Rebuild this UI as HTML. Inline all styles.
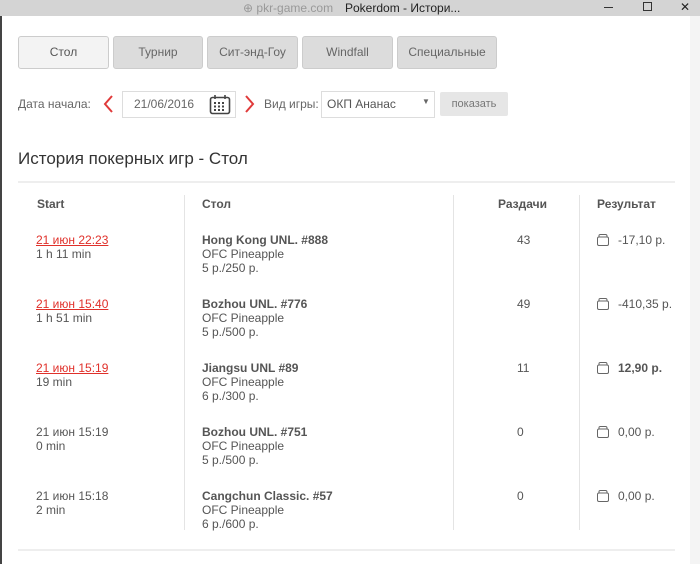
<!DOCTYPE html>
<html><head><meta charset="utf-8"><style>
*{margin:0;padding:0;box-sizing:border-box}
body{width:700px;height:564px;background:#fff;font-family:"Liberation Sans",Arial,sans-serif;color:#555;position:relative;overflow:hidden;font-size:12px}
.abs{position:absolute}
.title{left:0;top:0;width:700px;height:16px;background:#d4d4d4;font-size:12px;color:#222}
.tab{position:absolute;top:36px;height:33px;background:#dcdcdc;border:1px solid #ccc;border-radius:3px;text-align:center;line-height:31px;font-size:12px;color:#666}
.tab.act{background:#f3f3f3;color:#555}
.t{position:absolute;font-size:12px;white-space:nowrap}
.b{font-weight:bold;color:#555}
.red{color:#e0302a;text-decoration:underline}
.vl{position:absolute;width:1px;background:#e4e4e4;top:195px;height:335px}
</style></head><body>
<div class="abs title">
 <span class="abs" style="left:243px;top:1px;color:#999">⊕ pkr-game.com</span>
 <span class="abs" style="left:345px;top:1px">Pokerdom - Истори...</span>
 <span class="abs" style="left:604px;top:7px;width:9px;height:1px;background:#333"></span>
 <span class="abs" style="left:643px;top:2px;width:9px;height:9px;border:1px solid #333"></span>
 <span class="abs" style="left:680px;top:0px">✕</span>
</div>
<div class="abs" style="left:0;top:16px;width:2px;height:548px;background:#444"></div>
<div class="abs" style="left:690px;top:16px;width:10px;height:548px;background:#f4f4f4"></div>
<div class="tab act" style="left:18px;width:91px">Стол</div>
<div class="tab" style="left:113px;width:90px">Турнир</div>
<div class="tab" style="left:207px;width:91px">Сит-энд-Гоу</div>
<div class="tab" style="left:302px;width:91px">Windfall</div>
<div class="tab" style="left:397px;width:100px">Специальные</div>

<span class="t" style="left:18px;top:97px;color:#666">Дата начала:</span>
<svg class="abs" style="left:102px;top:94px" width="12" height="20" viewBox="0 0 12 20"><path d="M10 2 L3 10 L10 18" fill="none" stroke="#e03a3a" stroke-width="2"/></svg>
<div class="abs" style="left:122px;top:91px;width:114px;height:27px;border:1px solid #ddd"></div>
<span class="t" style="left:134px;top:97px;color:#666">21/06/2016</span>
<svg class="abs" style="left:209px;top:94px" width="22" height="21" viewBox="0 0 22 21"><rect x="1.5" y="3.5" width="19" height="16" rx="2" fill="none" stroke="#444" stroke-width="1.6"/><line x1="6" y1="1" x2="6" y2="5" stroke="#444" stroke-width="1.6"/><line x1="16" y1="1" x2="16" y2="5" stroke="#444" stroke-width="1.6"/><g fill="#444"><rect x="5" y="8" width="2" height="2"/><rect x="9" y="8" width="2" height="2"/><rect x="13" y="8" width="2" height="2"/><rect x="5" y="11.5" width="2" height="2"/><rect x="9" y="11.5" width="2" height="2"/><rect x="13" y="11.5" width="2" height="2"/><rect x="5" y="15" width="2" height="2"/><rect x="9" y="15" width="2" height="2"/><rect x="13" y="15" width="2" height="2"/></g></svg>
<svg class="abs" style="left:244px;top:94px" width="12" height="20" viewBox="0 0 12 20"><path d="M2 2 L9 10 L2 18" fill="none" stroke="#e03a3a" stroke-width="2"/></svg>
<span class="t" style="left:264px;top:97px;color:#666">Вид игры:</span>
<div class="abs" style="left:321px;top:91px;width:114px;height:27px;border:1px solid #ddd"></div>
<span class="t" style="left:327px;top:97px;color:#555">ОКП Ананас</span>
<span class="t" style="left:422px;top:97px;font-size:8px;color:#666">▼</span>
<div class="abs" style="left:440px;top:92px;width:68px;height:24px;background:#e6e6e6;border-radius:2px;text-align:center;line-height:24px;font-size:11px;color:#777">показать</div>

<span class="t" style="left:18px;top:149px;font-size:17px;color:#333">История покерных игр - Стол</span>
<div class="abs" style="left:18px;top:181px;width:657px;height:2px;background:#eee"></div>
<div class="abs" style="left:18px;top:549px;width:657px;height:2px;background:#eee"></div>
<div class="vl" style="left:184px"></div><div class="vl" style="left:453px"></div><div class="vl" style="left:579px"></div>

<span class="t b" style="left:37px;top:197px">Start</span>
<span class="t b" style="left:202px;top:197px">Стол</span>
<span class="t b" style="left:498px;top:197px">Раздачи</span>
<span class="t b" style="left:597px;top:197px">Результат</span>

<div id="rows"></div>
<script>
var d=[["21 июн 22:23","1 h 11 min","Hong Kong UNL. #888","5 р./250 р.","43","-17,10 р.",1,0],
["21 июн 15:40","1 h 51 min","Bozhou UNL. #776","5 р./500 р.","49","-410,35 р.",1,0],
["21 июн 15:19","19 min","Jiangsu UNL #89","6 р./300 р.","11","12,90 р.",1,1],
["21 июн 15:19","0 min","Bozhou UNL. #751","5 р./500 р.","0","0,00 р.",0,0],
["21 июн 15:18","2 min","Cangchun Classic. #57","6 р./600 р.","0","0,00 р.",0,0]];
var h="";d.forEach(function(r,i){var y=233+i*64;
h+='<span class="t'+(r[6]?' red':'')+'" style="left:36px;top:'+y+'px">'+r[0]+'</span>';
h+='<span class="t" style="left:36px;top:'+(y+14)+'px">'+r[1]+'</span>';
h+='<span class="t b" style="left:202px;top:'+y+'px">'+r[2]+'</span>';
h+='<span class="t" style="left:202px;top:'+(y+14)+'px">OFC Pineapple</span>';
h+='<span class="t" style="left:202px;top:'+(y+28)+'px">'+r[3]+'</span>';
h+='<span class="t" style="left:517px;top:'+y+'px">'+r[4]+'</span>';
h+='<svg class="abs" style="left:596px;top:'+(y)+'px" width="14" height="14" viewBox="0 0 14 14"><rect x="1.5" y="4" width="11" height="8.5" rx="1.5" fill="none" stroke="#666"/><path d="M3 4 L3 2.5 Q3 1.5 4.5 1.5 L9.5 1.5 Q11 1.5 11 3 L11 4" fill="none" stroke="#666"/></svg>';
h+='<span class="t'+(r[7]?' b':'')+'" style="left:618px;top:'+y+'px">'+r[5]+'</span>';});
document.getElementById("rows").innerHTML=h;
</script>
</body></html>
